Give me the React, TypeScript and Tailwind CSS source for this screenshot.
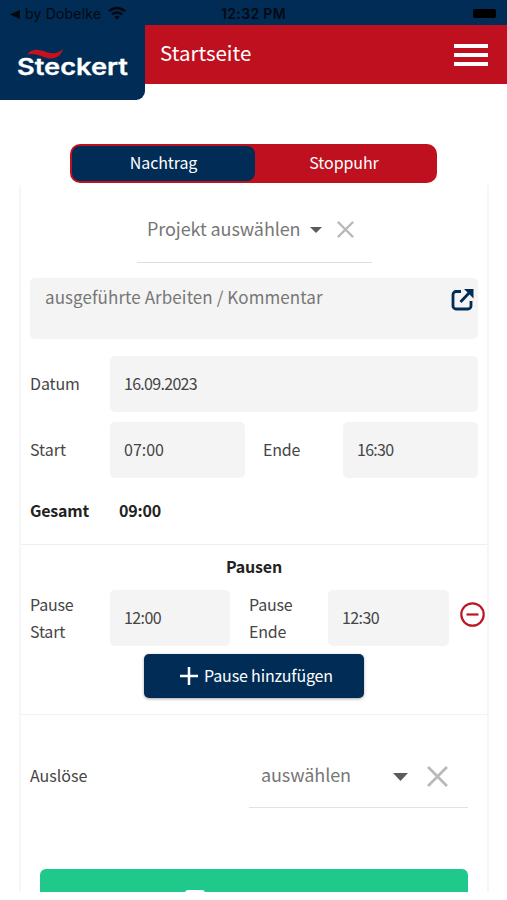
import React from "react";

function Field({ children, className }: { children: React.ReactNode; className: string }) {
  return (
    <div className={`flex h-14 items-center rounded-[5px] bg-[#f4f4f4] pl-[14px] ${className}`}>{children}</div>
  );
}

function Cross({ className }: { className: string }) {
  return (
    <svg viewBox="0 0 20 20" className={className} stroke="#b9b9b9" strokeWidth="2.600" fill="none">
      <path d="M1 1 19 19M19 1 1 19" />
    </svg>
  );
}

function Caret({ className }: { className: string }) {
  return (
    <svg viewBox="0 0 14 8" className={className} fill="#5c5c5c" preserveAspectRatio="none">
      <path d="M0 0h14L7 8z" />
    </svg>
  );
}

function StatusBar() {
  return (
    <div className="relative flex h-[25px] items-center bg-[#002c55] font-['Inter',sans-serif] text-[14px] text-[#05090f]">
      <svg viewBox="0 0 10 9" className="ml-[10px] mt-[3px] h-[9px] w-[10px]" fill="currentColor">
        <path d="M0 4.500 10 0v9z" />
      </svg>
      <span className="ml-[5px] mt-[2px] w-[77px] whitespace-nowrap tracking-[0.2px]">by Dobelke</span>
      <svg viewBox="0 0 18 14" className="ml-[6px] mt-[1px] h-[14px] w-[18px]" fill="none" stroke="currentColor" strokeWidth="2.500">
        <path d="M1 5.200C5.500.8 12.500.8 17 5.200M4 8.400c2.800-2.700 7.200-2.700 10 0" />
        <path d="M6.300 10.800c1.600-1.400 3.800-1.400 5.400 0L9 13.500z" fill="currentColor" stroke="none" />
      </svg>
      <span className="absolute left-[221px] top-0 whitespace-nowrap font-semibold tracking-[0.350px]">12:32 PM</span>
      <span className="absolute left-[473px] top-[9px] h-[9px] w-[23px] rounded-[2px] bg-black" />
    </div>
  );
}

function Logo() {
  return (
    <div className="absolute left-0 top-[24px] h-[76px] w-[145px] rounded-br-[9px] bg-[#002c55]">
      <svg viewBox="0 24 145 76" className="h-[76px] w-[145px]">
        <text x="17" y="75" textLength="111" lengthAdjust="spacingAndGlyphs" fontFamily="Inter" fontSize="23" fontWeight="600" fill="#fff" stroke="#fff" strokeWidth=".3">Steckert</text>
        <path d="M27 54.500c5-6 11-5.500 18-3 7 2.500 12 2.500 18-2.500-1.500 6-6 9.500-12 9.500-8 0-13-6.500-24-4z" fill="#c4121f" />
      </svg>
    </div>
  );
}

export default function App() {
  return (
    <div className="relative h-[900px] w-[507px] overflow-hidden bg-white font-['Noto_Sans_CJK_SC','Noto_Sans',sans-serif] text-[16px] leading-[27px] text-[#454545]">
      <StatusBar />
      <header className="flex h-[58.500px] items-center justify-between bg-[#be101e] pl-[160px] pr-[19px]">
        <h1 className="pb-[4px] text-[20.500px] text-white">Startseite</h1>
        <div className="mt-[1px] flex w-[34px] flex-col gap-[5px]">
          <span className="h-[4px] bg-white" />
          <span className="h-[4px] bg-white" />
          <span className="h-[4px] bg-white" />
        </div>
      </header>
      <Logo />

      <div className="ml-[70px] mt-[60px] flex h-[39px] w-[367px] rounded-[10px] bg-[#be101e] p-[2px] text-white">
        <div className="flex w-[183px] items-center justify-center rounded-[8px] bg-[#002c55] pb-[2px] tracking-[-0.1px]">Nachtrag</div>
        <div className="flex flex-1 items-center justify-center pb-[2px] pr-[2px] tracking-[-0.1px]">Stoppuhr</div>
      </div>

      <main className="ml-[19px] mt-[2px] h-[707px] w-[470px] overflow-hidden border-x-2 border-[#f6f6f6]">
        <div className="ml-[116px] flex h-[78px] w-[235px] items-center border-b border-[#dfdfdf] pl-[10px] pt-[11px] text-[18px] text-[#777]">
          <span className="w-[154px] whitespace-nowrap tracking-[-0.1px]">Projekt auswählen</span>
          <Caret className="ml-[9px] mt-[3px] h-[6px] w-[12px]" />
          <Cross className="ml-[15px] mt-[2px] h-[17px] w-[17px]" />
        </div>

        <div className="ml-[9px] mt-[15px] flex h-[61px] w-[448px] justify-between rounded-[5px] bg-[#f4f4f4] pl-[15px] pr-[4px] pt-[5px] text-[17px] text-[#777]">
          <span className="tracking-[0.080px]">ausgeführte Arbeiten / Kommentar</span>
          <svg viewBox="0 0 23 23" className="mt-[5px] h-[23px] w-[23px]" fill="none" stroke="#002c55" strokeWidth="2.800">
            <path d="M10 3.500H5a3 3 0 0 0-3 3V18a3 3 0 0 0 3 3h12a3 3 0 0 0 3-3v-5M9.500 14 18 5" />
            <path d="M13 1h9.500v9.500z" fill="#002c55" stroke="none" />
          </svg>
        </div>

        <div className="ml-[9px] mt-[17px] flex items-center">
          <span className="w-[80px] tracking-[-0.1px]">Datum</span>
          <Field className="w-[368px] tracking-[-0.700px]">16.09.2023</Field>
        </div>
        <div className="ml-[9px] mt-[10px] flex items-center">
          <span className="w-[80px]">Start</span>
          <Field className="w-[135px]">07:00</Field>
          <span className="ml-[18px] w-[80px] tracking-[-0.2px]">Ende</span>
          <Field className="w-[135px] tracking-[-0.700px]">16:30</Field>
        </div>
        <div className="flex h-[67px] items-center border-b border-[#efefef] pl-[9px] font-bold tracking-[-0.2px] text-[#222]">
          <span className="w-[89px]">Gesamt</span>
          <span>09:00</span>
        </div>

        <section className="h-[170px] border-b border-[#f2f2f2] pt-[8px]">
          <h2 className="text-center font-bold tracking-[-0.2px] text-[#222]">Pausen</h2>
          <div className="ml-[9px] mt-[10px] flex items-center">
            <span className="w-[80px] tracking-[-0.2px]">Pause<br />Start</span>
            <Field className="w-[120px] tracking-[-0.600px]">12:00</Field>
            <span className="ml-[19px] w-[79px] tracking-[-0.2px]">Pause<br />Ende</span>
            <Field className="w-[121px] tracking-[-0.600px]">12:30</Field>
            <svg viewBox="0 0 25 25" className="-mt-[7px] ml-[11px] h-[25px] w-[25px]" fill="none" stroke="#be1525" strokeWidth="2.200">
              <circle cx="12.500" cy="12.500" r="11.200" />
              <path d="M6.500 12.500h12" />
            </svg>
          </div>
          <button className="ml-[123px] mt-[8px] flex h-[44px] w-[220px] items-center rounded-[5px] bg-[#002c55] pl-[36px] text-white shadow-[0_1px_3px_rgba(0,0,0,0.35)]">
            <svg viewBox="0 0 18 18" className="h-[18px] w-[18px]" stroke="#fff" strokeWidth="2.500">
              <path d="M9 0v18M0 9h18" />
            </svg>
            <span className="ml-[6px] whitespace-nowrap tracking-[-0.150px]">Pause hinzufügen</span>
          </button>
        </section>

        <div className="flex h-[93px] pl-[9px]">
          <span className="mt-[47px] w-[219px]">Auslöse</span>
          <div className="flex w-[219px] items-center border-b border-[#e2e2e2] pl-[12px] pt-[28px] text-[18px] text-[#777]">
            <span className="w-[90px] tracking-[-0.1px]">auswählen</span>
            <Caret className="ml-[42px] mt-[4px] h-[8px] w-[15px]" />
            <Cross className="ml-[19px] mt-[4px] h-[21px] w-[21px]" />
          </div>
        </div>

        <div className="ml-[19px] mt-[61px] h-[50px] w-[428px] rounded-[6px] bg-[#1ec98b] pl-[145px] pt-[21px]">
          <div className="h-[20px] w-[20px] rounded-t-[3px] bg-white" />
        </div>
      </main>
    </div>
  );
}
